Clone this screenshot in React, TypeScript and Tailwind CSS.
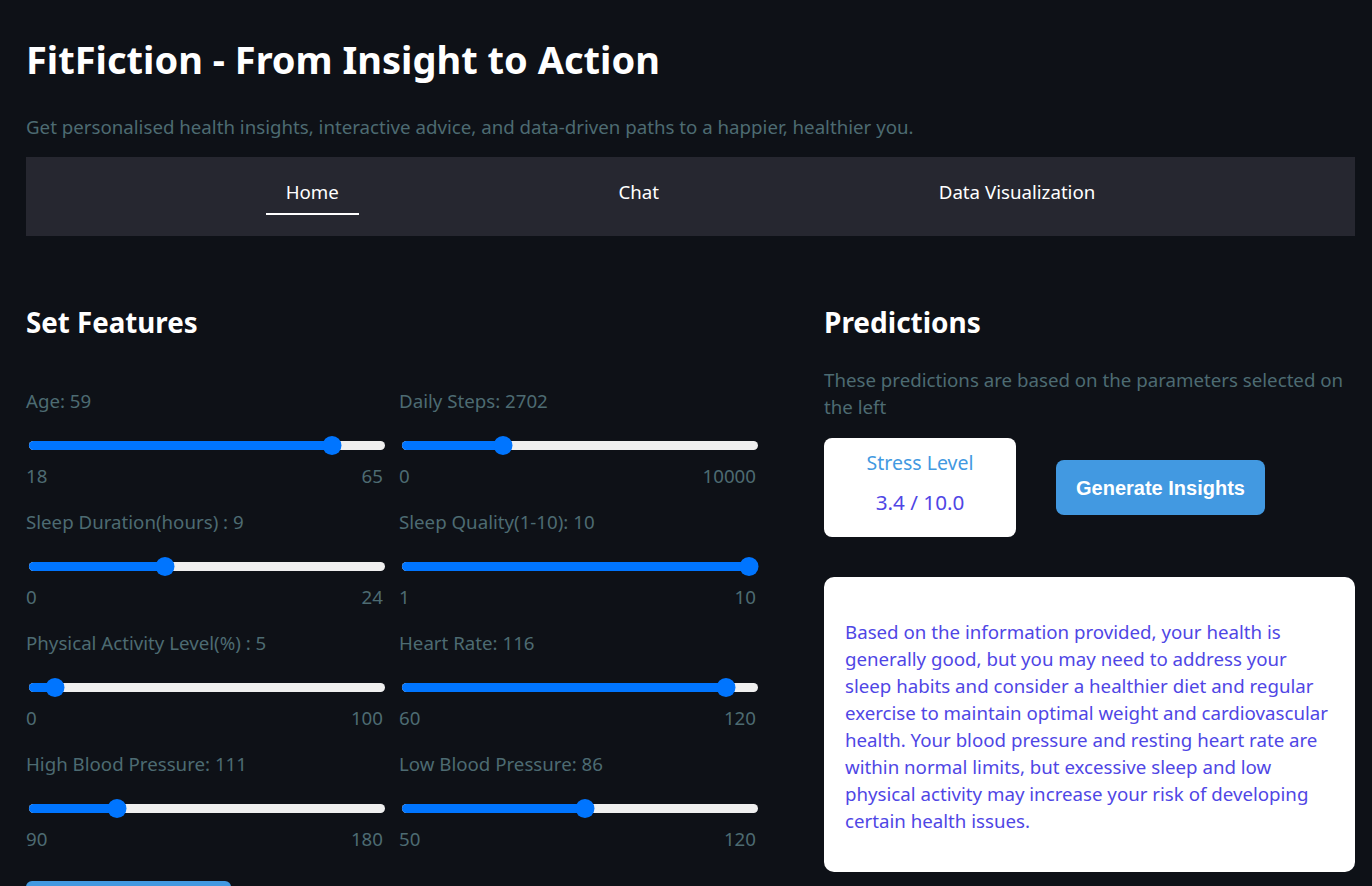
import React from "react";

/* ---------- Types ---------- */
type Feature = { label: string; value: number; min: number; max: number };

const features: Feature[] = [
  { label: "Age: 59", value: 59, min: 18, max: 65 },
  { label: "Daily Steps: 2702", value: 2702, min: 0, max: 10000 },
  { label: "Sleep Duration(hours) : 9", value: 9, min: 0, max: 24 },
  { label: "Sleep Quality(1-10): 10", value: 10, min: 1, max: 10 },
  { label: "Physical Activity Level(%) : 5", value: 5, min: 0, max: 100 },
  { label: "Heart Rate: 116", value: 116, min: 60, max: 120 },
  { label: "High Blood Pressure: 111", value: 111, min: 90, max: 180 },
  { label: "Low Blood Pressure: 86", value: 86, min: 50, max: 120 },
];

const tabs = ["Home", "Chat", "Data Visualization"];

/* ---------- Slider ---------- */
function Slider({ f }: { f: Feature }) {
  const frac = (f.value - f.min) / (f.max - f.min);
  // thumb stays inside the track (19px thumb)
  const pos = `calc(9.5px + ${frac} * (100% - 19px))`;
  return (
    <div className="flex flex-col">
      <div className="text-[18.7px] leading-[27px] text-[#4d6b72]">{f.label}</div>
      <div className="relative ml-[3px] mt-[22px] h-[19px]">
        <div className="absolute left-0 right-0 top-[5px] h-[9px] rounded-full bg-[#efefef]" />
        <div className="absolute left-0 top-[5px] h-[9px] rounded-full bg-[#0075ff]" style={{ width: pos }} />
        <div
          className="absolute top-0 h-[19px] w-[19px] -translate-x-1/2 rounded-full bg-[#0075ff]"
          style={{ left: pos }}
        />
      </div>
      <div className="mt-[7px] flex justify-between pr-[2px] text-[18.7px] leading-[27px] text-[#4d6b72]">
        <span>{f.min}</span>
        <span>{f.max}</span>
      </div>
    </div>
  );
}

export default function App() {
  return (
    <div
      className="h-screen overflow-hidden bg-[#0e1117] pl-[26px] pr-[17px] text-white"
      style={{ fontFamily: '"Noto Sans", "Open Sans", sans-serif' }}
    >
      <h1 className="pt-[33px] text-[38px] font-bold leading-[52px]">FitFiction - From Insight to Action</h1>
      <p className="mt-[28px] text-[18.7px] leading-[27px] text-[#4d6b72]">
        Get personalised health insights, interactive advice, and data-driven paths to a happier, healthier you.
      </p>

      {/* nav */}
      <div className="mt-[17px] flex h-[79px] items-start justify-evenly bg-[#262730]">
        {tabs.map((t, i) => (
          <div
            key={t}
            className={`px-5 pt-[21px] pb-[8px] text-[18.7px] leading-[27px] text-white border-b-2 ${
              i === 0 ? "border-white" : "border-transparent"
            }`}
          >
            {t}
          </div>
        ))}
      </div>

      <div className="mt-[66px] grid grid-cols-[732px_531px] gap-x-[66px]">
        {/* left */}
        <div>
          <h2 className="text-[27.7px] font-bold leading-[40px]">Set Features</h2>
          <div className="mt-[45px] grid grid-cols-2 gap-x-[14px] gap-y-[19px]">
            {features.map((f) => (
              <Slider key={f.label} f={f} />
            ))}
          </div>
          <button className="mt-[29px] h-[50px] w-[205px] rounded-md bg-[#4299e1]" />
        </div>

        {/* right */}
        <div>
          <h2 className="text-[28px] font-bold leading-[40px]">Predictions</h2>
          <p className="mt-[24px] text-[18.7px] leading-[27px] text-[#4d6b72]">
            These predictions are based on the parameters selected on the left
          </p>
          <div className="mt-[18px] flex items-center gap-[40px]">
            <div className="flex h-[99px] w-[192px] flex-col items-center rounded-lg bg-white pt-[12px]">
              <div className="text-[19.5px] leading-[26px] text-[#4299e1]">Stress Level</div>
              <div className="mt-[12px] text-[20.7px] leading-[28px] text-[#4f46e5]">3.4 / 10.0</div>
            </div>
            <button
              className="h-[55px] w-[209px] rounded-lg bg-[#4299e1] text-[20px] font-bold text-white"
              style={{ fontFamily: '"Liberation Sans", Arial, sans-serif' }}
            >
              Generate Insights
            </button>
          </div>
          <div className="mt-[40px] rounded-[10px] bg-white pl-[21px] pr-[20px] pt-[41px] pb-[38px]">
            <p className="max-w-[492px] text-[18.7px] leading-[27px] text-[#4f46e5]">
              Based on the information provided, your health is generally good, but you may need to address your
              sleep habits and consider a healthier diet and regular exercise to maintain optimal weight and
              cardiovascular health. Your blood pressure and resting heart rate are within normal limits, but
              excessive sleep and low physical activity may increase your risk of developing certain health issues.
            </p>
          </div>
        </div>
      </div>
    </div>
  );
}
